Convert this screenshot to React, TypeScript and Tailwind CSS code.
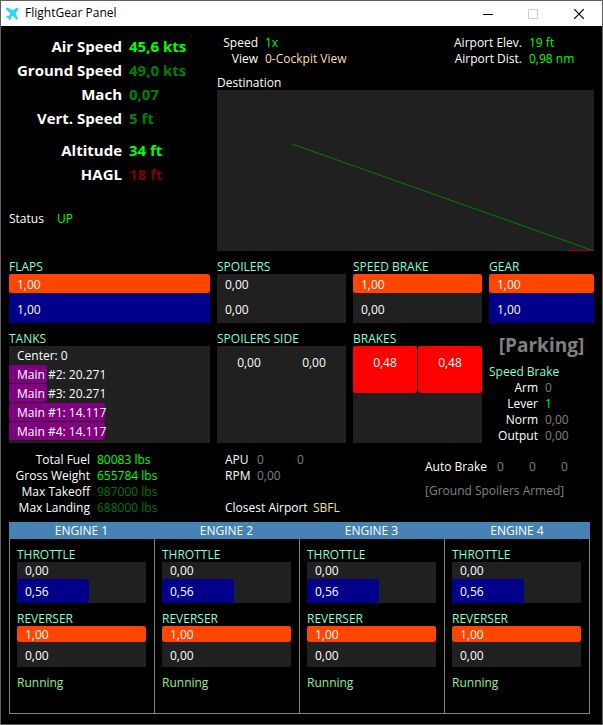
import React from "react";

type Tone = { label: string; value: string; color: string };

const primary: Tone[] = [
  { label: "Air Speed", value: "45,6 kts", color: "text-[#00ff00]" },
  { label: "Ground Speed", value: "49,0 kts", color: "text-[#008000]" },
  { label: "Mach", value: "0,07", color: "text-[#008000]" },
  { label: "Vert. Speed", value: "5 ft", color: "text-[#008000]" },
];

const heights: Tone[] = [
  { label: "Altitude", value: "34 ft", color: "text-[#00ff00]" },
  { label: "HAGL", value: "18 ft", color: "text-[#800000]" },
];

const view: Tone[] = [
  { label: "Speed", value: "1x", color: "text-[#00ff00]" },
  { label: "View", value: "0-Cockpit View", color: "text-[#ffdab9]" },
];

const airport: Tone[] = [
  { label: "Airport Elev.", value: "19 ft", color: "text-[#00ff00]" },
  { label: "Airport Dist.", value: "0,98 nm", color: "text-[#00ff00]" },
];

const speedBrake: Tone[] = [
  { label: "Arm", value: "0", color: "text-[#808080]" },
  { label: "Lever", value: "1", color: "text-[#00ff00]" },
  { label: "Norm", value: "0,00", color: "text-[#808080]" },
  { label: "Output", value: "0,00", color: "text-[#808080]" },
];

const weights: Tone[] = [
  { label: "Total Fuel", value: "80083 lbs", color: "text-[#00ff00]" },
  { label: "Gross Weight", value: "655784 lbs", color: "text-[#00ff00]" },
  { label: "Max Takeoff", value: "987000 lbs", color: "text-[#007800]" },
  { label: "Max Landing", value: "688000 lbs", color: "text-[#007800]" },
];

const tanks = [
  { name: "Center: 0", level: 0 },
  { name: "Main #2: 20.271", level: 0.19 },
  { name: "Main #3: 20.271", level: 0.19 },
  { name: "Main #1: 14.117", level: 0.48 },
  { name: "Main #4: 14.117", level: 0.48 },
];

const format = (n: number) => n.toFixed(2).replace(".", ",");

function Readings({ items, columns }: { items: Tone[]; columns: string }) {
  return (
    <dl className={`grid gap-x-[7px] ${columns}`}>
      {items.map((item) => (
        <React.Fragment key={item.label}>
          <dt className="text-right whitespace-nowrap">{item.label}</dt>
          <dd className={`whitespace-nowrap ${item.color}`}>{item.value}</dd>
        </React.Fragment>
      ))}
    </dl>
  );
}

function GaugeTitle({ children }: { children: React.ReactNode }) {
  return <h2 className="h-4 leading-[18px] whitespace-nowrap text-[#7fffd4]">{children}</h2>;
}

function Bar({ level, text, fill, size }: { level: number; text: string; fill: string; size: string }) {
  return (
    <div className={`grid grid-rows-1 items-center ${size}`}>
      <div
        className={`col-start-1 row-start-1 h-full rounded-[3px] ${fill}`}
        style={{ width: `${level * 100}%` }}
      />
      <span className="col-start-1 row-start-1 pt-0.5 pl-2 whitespace-nowrap">{text}</span>
    </div>
  );
}

function Gauge({ title, target, actual, compact }: { title: string; target: number; actual: number; compact?: boolean }) {
  return (
    <section>
      <GaugeTitle>{title}</GaugeTitle>
      <div className="flex flex-col gap-px bg-[#202020]">
        <Bar level={target} text={format(target)} fill="bg-[#ff4500]" size={compact ? "h-4" : "h-[19px]"} />
        <Bar level={actual} text={format(actual)} fill="bg-[#00008b]" size={compact ? "h-6" : "h-[29px]"} />
      </div>
    </section>
  );
}

function SideGauge({ title, left, right }: { title: string; left: number; right: number }) {
  return (
    <section>
      <GaugeTitle>{title}</GaugeTitle>
      <div className="grid h-[97px] grid-cols-2 gap-px bg-[#202020]">
        {[left, right].map((level, i) => (
          <div key={i} className="grid">
            <div
              className="col-start-1 row-start-1 rounded-[3px] bg-[#ff0000]"
              style={{ height: `${level * 100}%` }}
            />
            <span className="col-start-1 row-start-1 pt-[9px] text-center">{format(level)}</span>
          </div>
        ))}
      </div>
    </section>
  );
}

function Engine({ index }: { index: number }) {
  return (
    <section>
      <h2 className="h-[17px] bg-[#4682b4] text-center leading-[18px]">ENGINE {index}</h2>
      <div
        className={`flex h-[175px] flex-col gap-[7px] border-b border-l border-[#808080] py-[7px] pr-2 pl-[7px] ${
          index === 4 ? "border-r" : ""
        }`}
      >
        <Gauge title="THROTTLE" target={0} actual={0.56} compact />
        <Gauge title="REVERSER" target={1} actual={0} compact />
        <p className="pt-px text-[#90ee90]">Running</p>
      </div>
    </section>
  );
}

function TitleBar() {
  return (
    <header className="flex h-[25px] items-center bg-white text-black">
      <svg className="ml-1 h-4 w-4" viewBox="0 0 16 16" fill="#30d5fa" aria-hidden="true">
        <path d="M1 2.2 2.6 1.6 8 4.6 10.6 2.2 12.8 1.6 13.4 2.4 12.8 4.4 10.6 7 13 12.6 11.8 14 7.8 9.8 5.8 11.4 5.8 13.6 4.6 14.6 3.4 12.2 1 11 1.8 9.8 4 9.8 5.4 7.6 1.2 3.8Z" />
      </svg>
      <h1 className="ml-1 flex-1 pb-0.5">FlightGear Panel</h1>
      <button type="button" aria-label="Minimize" className="flex h-full w-[45px] items-center justify-center">
        <svg className="h-[10px] w-[10px]" viewBox="0 0 10 10" stroke="#000" aria-hidden="true">
          <path d="M0 5.5H10" />
        </svg>
      </button>
      <button type="button" aria-label="Maximize" disabled className="flex h-full w-[45px] items-center justify-center">
        <svg className="h-[10px] w-[10px]" viewBox="0 0 10 10" stroke="#ccc" fill="none" aria-hidden="true">
          <path d="M.5.5h9v9h-9z" />
        </svg>
      </button>
      <button type="button" aria-label="Close" className="flex h-full w-[47px] items-center justify-center">
        <svg className="h-[10px] w-[10px]" viewBox="0 0 10 10" stroke="#000" strokeWidth="1.2" aria-hidden="true">
          <path d="M0 0 10 10M10 0 0 10" />
        </svg>
      </button>
    </header>
  );
}

export default function App() {
  return (
    <div className="border border-[#606060] bg-black font-['Open_Sans','Noto_Sans',sans-serif] text-[12px] leading-4 text-white">
      <TitleBar />
      <main className="flex flex-col gap-1.5 px-2 pt-2 pb-[10px]">
        <div className="grid grid-cols-[201fr_129fr_129fr_105fr] gap-[7px]">
          <section>
            <div className="flex flex-col gap-2 text-[15px] leading-6 font-bold">
              <Readings items={primary} columns="grid-cols-[113px_1fr]" />
              <Readings items={heights} columns="grid-cols-[113px_1fr]" />
            </div>
            <div className="mt-[25px] flex">
              <span className="w-12">Status</span>
              <span className="text-[#00ff00]">UP</span>
            </div>
          </section>
          <section className="col-span-3 flex flex-col">
            <div className="flex justify-between pt-px">
              <Readings items={view} columns="grid-cols-[41px_1fr]" />
              <Readings items={airport} columns="grid-cols-[auto_65px]" />
            </div>
            <h2 className="mt-[7px] h-4 leading-[18px]">Destination</h2>
            <svg className="h-[161px] w-full bg-[#202020]" viewBox="0 0 377 161" preserveAspectRatio="none" fill="none" aria-label="Descent profile">
              <path d="M75 54 377 161" stroke="#008000" />
              <path d="M351 160.500H377" stroke="#a00000" />
            </svg>
          </section>

          <Gauge title="FLAPS" target={1} actual={1} />
          <Gauge title="SPOILERS" target={0} actual={0} />
          <Gauge title="SPEED BRAKE" target={1} actual={0} />
          <Gauge title="GEAR" target={1} actual={1} />

          <section>
            <GaugeTitle>TANKS</GaugeTitle>
            <div className="flex h-[97px] flex-col gap-px bg-[#202020]">
              {tanks.map((tank) => (
                <Bar key={tank.name} level={tank.level} text={tank.name} fill="bg-[#800080]" size="h-[18px]" />
              ))}
            </div>
          </section>
          <SideGauge title="SPOILERS SIDE" left={0} right={0} />
          <SideGauge title="BRAKES" left={0.48} right={0.48} />
          <section>
            <p className="h-[34px] text-center text-[19px] leading-[30px] font-bold text-[#808080]">[Parking]</p>
            <h2 className="text-[#7fffd4]">Speed Brake</h2>
            <Readings items={speedBrake} columns="grid-cols-[49px_1fr]" />
          </section>

          <section className="pt-px">
            <Readings items={weights} columns="grid-cols-[81px_1fr]" />
          </section>
          <section className="pt-px pl-2">
            <dl className="grid grid-cols-[25px_33px_1fr] gap-x-[7px]">
              <dt>APU</dt>
              <dd className="text-[#808080]">0</dd>
              <dd className="text-[#808080]">0</dd>
              <dt>RPM</dt>
              <dd className="text-[#808080]">0,00</dd>
            </dl>
            <p className="mt-4 flex whitespace-nowrap">
              <span className="w-[88px]">Closest Airport</span>
              <span className="text-[#f0e68c]">SBFL</span>
            </p>
          </section>
          <section className="col-span-2 flex flex-col items-end gap-2 pt-2">
            <div className="flex w-[169px]">
              <span className="w-[72px]">Auto Brake</span>
              <span className="w-8 text-[#808080]">0</span>
              <span className="w-8 text-[#808080]">0</span>
              <span className="w-8 text-[#808080]">0</span>
            </div>
            <p className="w-[169px] whitespace-nowrap text-[#808080]">[Ground Spoilers Armed]</p>
          </section>
        </div>

        <div className="mr-1 grid grid-cols-[145fr_145fr_145fr_146fr]">
          {[1, 2, 3, 4].map((n) => (
            <Engine key={n} index={n} />
          ))}
        </div>
      </main>
    </div>
  );
}
